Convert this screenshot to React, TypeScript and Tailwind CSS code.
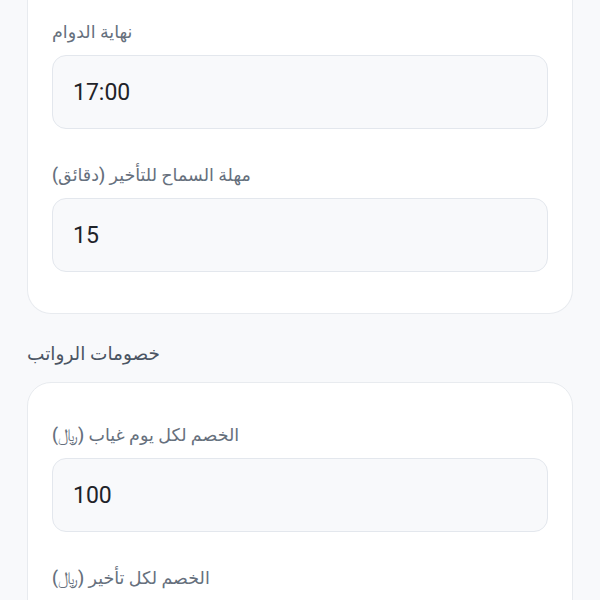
const fields1 = [
  { label: 'نهاية الدوام', value: '17:00' },
  { label: 'مهلة السماح للتأخير (دقائق)', value: '15' },
]

const fields2 = [
  { label: 'الخصم لكل يوم غياب (﷼)', value: '100' },
  { label: 'الخصم لكل تأخير (﷼)', value: '50' },
]

function Field({ label, value, first }: { label: string; value: string; first?: boolean }) {
  return (
    <div className={first ? '' : 'mt-[34px]'}>
      <div className="h-[24px] mb-[11px] flex items-center">
        <span dir="rtl" className="text-[17.5px] leading-[24px] font-medium text-[#66707d]">
          {label}
        </span>
      </div>
      <div className="h-[74px] rounded-[14px] border border-[#e3e7ed] bg-[#f8f9fb] flex items-center px-[20px] pt-[3px]">
        <span className="text-[23px] text-[#1f2329]">{value}</span>
      </div>
    </div>
  )
}

export default function App() {
  return (
    <div
      className="h-[600px] overflow-hidden bg-[#f8f9fb] px-[27px]"
      style={{ fontFamily: 'Roboto, "DejaVu Sans", "Noto Sans", sans-serif' }}
    >
      {/* working hours card, scrolled past its top */}
      <div className="bg-white border border-t-0 border-[#e8ebef] rounded-b-[24px] px-[24px] pt-[20px] pb-[41px]">
        {fields1.map((f, i) => (
          <Field key={f.label} label={f.label} value={f.value} first={i === 0} />
        ))}
      </div>

      <div className="mt-[27px] mb-[15px] h-[26px] flex items-center">
        <h2 dir="rtl" className="text-[18.5px] leading-[26px] font-medium text-[#4b5563]">
          خصومات الرواتب
        </h2>
      </div>

      <div className="bg-white border border-[#e8ebef] rounded-[24px] px-[24px] pt-[40px] pb-[40px]">
        {fields2.map((f, i) => (
          <Field key={f.label} label={f.label} value={f.value} first={i === 0} />
        ))}
      </div>
    </div>
  )
}
